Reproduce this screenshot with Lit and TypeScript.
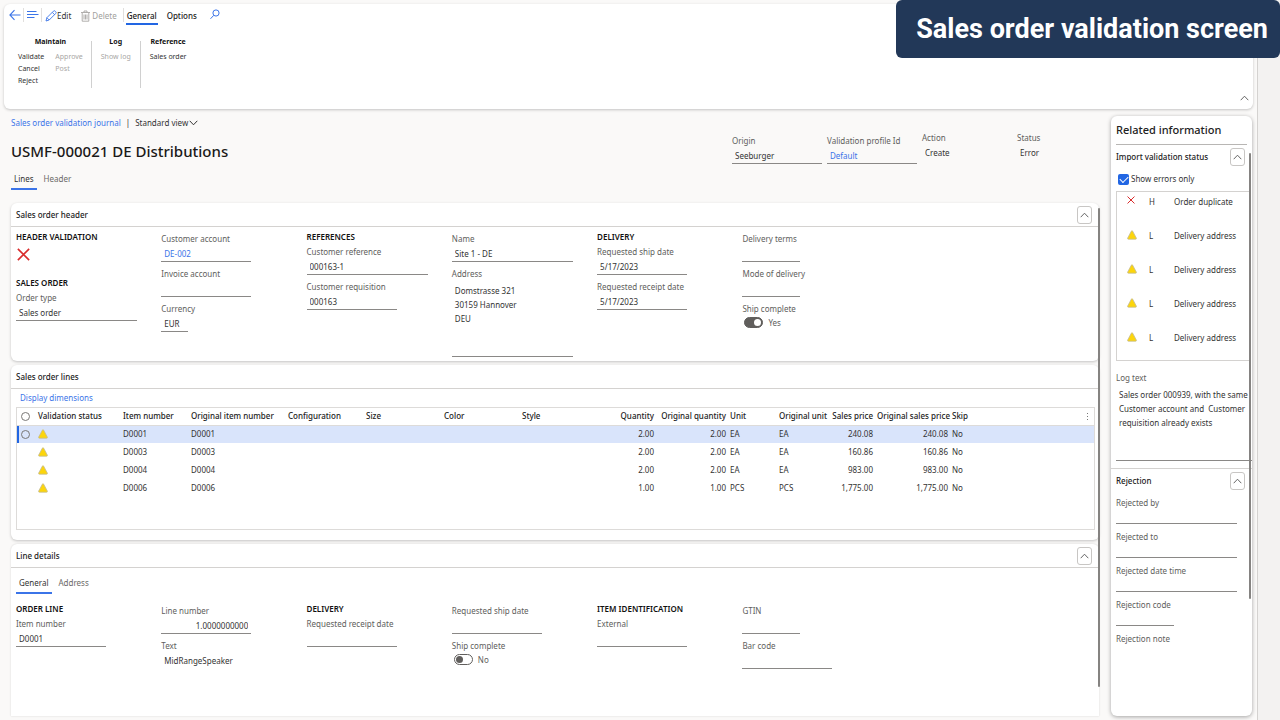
import { LitElement, html, css, svg, nothing } from "lit";
import { customElement } from "lit/decorators.js";
import { classMap } from "lit/directives/class-map.js";

type FieldSize = "xs" | "sm" | "md" | "lg";

interface Line {
  item: string;
  qty: string;
  unit: string;
  price: string;
}

const LINES: Line[] = [
  { item: "D0001", qty: "2.00", unit: "EA", price: "240.08" },
  { item: "D0003", qty: "2.00", unit: "EA", price: "160.86" },
  { item: "D0004", qty: "2.00", unit: "EA", price: "983.00" },
  { item: "D0006", qty: "1.00", unit: "PCS", price: "1,775.00" },
];

const ISSUES = [
  { error: true, level: "H", text: "Order duplicate" },
  { error: false, level: "L", text: "Delivery address" },
  { error: false, level: "L", text: "Delivery address" },
  { error: false, level: "L", text: "Delivery address" },
  { error: false, level: "L", text: "Delivery address" },
];

const icon = (w: number, h: number, body: unknown) =>
  html`<svg width=${w} height=${h} viewBox="0 0 ${w} ${h}" fill="none" aria-hidden="true">${body}</svg>`;

const chevronUp = icon(9, 6, svg`<path d="M.7 5.2 4.5 1.2 8.3 5.2" stroke="#555" stroke-width=".9"/>`);
const chevronDown = icon(9, 6, svg`<path d="M.7.8 4.5 4.8 8.3.8" stroke="#333" stroke-width="1"/>`);
const warning = icon(
  10,
  10,
  svg`<path d="M4.4 1.1Q5 .1 5.6 1.1L9.3 8Q9.7 9.2 8.6 9.2H1.4Q.3 9.2.7 8Z" fill="#fcd50c" stroke="#c4bb98" stroke-width=".8"/>`,
);
const cross = (size: number) =>
  html`<svg width=${size} height=${size} viewBox="0 0 12 12" fill="none" aria-hidden="true">
    <path d="M.8.8 11.2 11.2M11.2.8.8 11.2" stroke="#d92c2c" stroke-width="1.5" />
  </svg>`;

let nextId = 0;

const field = (label: string, value = "", size: FieldSize = "md", kind = "") => {
  const id = `f${nextId++}`;
  return html`<div class="field ${size} ${kind}">
    <label for=${id}>${label}</label>
    <input id=${id} type="text" .value=${value} />
  </div>`;
};

const toggle = (label: string, on: boolean) => {
  const id = `f${nextId++}`;
  return html`<div class="field toggle">
    <label for=${id}>${label}</label>
    <div class="switch-row">
      <input id=${id} class="switch" type="checkbox" role="switch" .checked=${on} />
      <span>${on ? "Yes" : "No"}</span>
    </div>
  </div>`;
};

@customElement("app-root")
export class AppRoot extends LitElement {
  static styles = css`
    :host {
      display: block;
      position: relative;
      min-height: 100vh;
      background: #faf9f8;
      color: #333;
      font: 8px/14px "Noto Sans", "Open Sans", sans-serif;
    }
    * { box-sizing: border-box; }
    svg { display: block; flex: none; }
    h1, h2, h3, p { margin: 0; font-size: inherit; }
    button, input, textarea { font: inherit; color: inherit; margin: 0; }
    button { background: none; border: 0; padding: 0; white-space: nowrap; }
    a { color: #3b74e8; text-decoration: none; }

    .page { display: flex; min-height: 100vh; }
    .workspace { flex: 1; min-width: 0; display: flex; flex-direction: column; padding: 4px; }
    .rail { width: 23px; background: #f3f2f1; border-left: 1px solid #d4d2d0; }
    .banner {
      position: absolute; top: 0; right: 0; z-index: 5;
      padding: 0 12px 0 20px; border-radius: 6px;
      background: #223858; color: #fff;
      font: 700 27px/58px Roboto, sans-serif; white-space: nowrap;
    }
    .surface { background: #fff; border-radius: 6px; box-shadow: 0 1px 3px rgba(0, 0, 0, 0.22); }

    .ribbon { height: 105px; padding: 2px 4px 4px 5px; display: flex; flex-direction: column; }
    .commands { display: flex; align-items: center; height: 18px; }
    .commands .bar { width: 1px; height: 14px; background: #e1dfdd; margin: 0 3px 0 2px; }
    .cmd { display: flex; align-items: center; gap: 0; height: 18px; padding-top: 1px; }
    .cmd.off { color: #a19f9d; gap: 2px; margin: 0 4px 0 10px; }
    .menu-tab { height: 19px; padding: 3px 1px 0; margin: 0 9px 0 -1px; font-weight: 500; color: #222; border-bottom: 2px solid transparent; }
    .menu-tab.on { border-color: #2266e3; }
    .search { margin-left: 3px; }
    .groups { display: flex; margin-top: 17px; font-size: 7px; line-height: 12px; }
    .group { height: 47px; padding: 0 9px; border-left: 1px solid #d0d0d0; text-align: center; }
    .group:first-child { border: 0; padding-right: 8px; }
    .group h2 { font-weight: 700; color: #111; line-height: 12px; margin: -5px 0 3px; }
    .group-cols { display: grid; grid-template-columns: auto auto; column-gap: 11px; text-align: left; }
    .group-cols div { display: flex; flex-direction: column; align-items: flex-start; }
    .group button { display: block; line-height: 12px; }
    .group button:disabled { color: #a8a6a4; }
    .ribbon-toggle { align-self: flex-end; margin-top: auto; padding: 4px 0; }

    .content { flex: 1; display: flex; gap: 12px; padding: 7px 1px 0 7px; }
    .main { flex: 1; min-width: 0; display: flex; flex-direction: column; }
    .intro { display: flex; justify-content: space-between; height: 87px; }
    .crumbs { display: flex; align-items: center; gap: 5px; white-space: nowrap; }
    .crumbs button { display: flex; align-items: center; gap: 1px; }
    .title { font-size: 15px; line-height: 22px; font-weight: 500; color: #1b1a19; margin: 10px 0 9px; white-space: nowrap; }
    .tabs { display: flex; gap: 4px; color: #6b6967; }
    .tabs button { padding: 0 3px 1px; line-height: 16px; border-bottom: 2px solid transparent; }
    .tabs .on { color: #333; border-color: #3b74e8; }
    .facts { display: flex; gap: 5px; padding-top: 18px; }
    .facts .plain { margin-top: -3px; }
    .facts .field:last-child { width: 82px; }

    .cards { flex: 1; display: flex; flex-direction: column; gap: 4px; position: relative; }
    .scroll-thumb { position: absolute; width: 2px; border-radius: 1px; background: #858381; }
    .cards > .scroll-thumb { top: 5px; bottom: 29px; right: -1px; }
    .card-head {
      display: flex; align-items: center; justify-content: space-between;
      height: 24px; padding: 0 7px 0 5px; border-bottom: 1px solid #d4d2d0;
    }
    .card-head h2 { font-weight: 500; color: #222; }
    .collapse {
      display: grid; place-items: center; width: 15px; height: 18px;
      border: 1px solid #c8c6c4; border-radius: 3px; background: #fff;
    }
    .columns { display: grid; grid-template-columns: repeat(6, 11fr) 16fr; padding: 3px 0 4px 5px; }
    .col { display: flex; flex-direction: column; gap: 5px; padding-top: 2px; min-width: 0; }
    .col.titled { padding-top: 0; }
    .col h3 { font-weight: 600; color: #111; line-height: 14px; margin-bottom: -4px; }
    .col .status { height: 26px; margin-bottom: 0; padding: 3px 1px; }

    .field { display: flex; flex-direction: column; }
    .field label { color: #605e5c; white-space: nowrap; line-height: 14px; }
    .field input[type="text"], .field textarea {
      height: 16px; width: 100%; padding: 0 3px; border: 0; border-bottom: 1px solid #8a8886;
      border-radius: 0; background: transparent; line-height: 14px; outline: 0;
    }
    .field textarea { height: 76px; padding-top: 3px; resize: none; display: block; overflow: hidden; }
    .field.xs { width: 27px; }
    .field.sm { width: 58px; }
    .field.md { width: 90px; }
    .field.lg { width: 121px; }
    .field.link input { color: #3b74e8; }
    .field.number input { text-align: right; }
    .field.plain input[type="text"] { border-color: transparent; }
    .switch-row { display: flex; align-items: center; gap: 5px; height: 13px; padding-left: 2px; color: #605e5c; }
    .switch {
      appearance: none; width: 19px; height: 11px; border-radius: 6px;
      border: 1px solid #605e5c; background: #fff; display: flex; align-items: center; padding: 0 1px;
    }
    .switch::before { content: ""; width: 7px; height: 7px; border-radius: 50%; background: #605e5c; }
    .switch:checked { background: #605e5c; justify-content: flex-end; }
    .switch:checked::before { background: #fff; }

    .lines-body { padding: 0 4px 10px 5px; }
    .lines-link { display: block; padding-left: 4px; line-height: 18px; }
    .grid-box { height: 123px; border: 1px solid #dddbd9; }
    table { width: 100%; border-collapse: collapse; table-layout: fixed; }
    th, td { height: 18px; padding: 0 2px; text-align: left; white-space: nowrap; line-height: 14px; }
    th { font-weight: 500; color: #222; height: 17px; border-bottom: 1px solid #dddbd9; }
    .num { text-align: right; }
    .selected { background: #d9e4fb; }
    .selected td:first-child { box-shadow: inset 2px 0 #2266e3; }
    .radio {
      appearance: none; display: block; width: 9px; height: 9px; margin-left: 2px;
      border: 1px solid #7a7876; border-radius: 50%; background: transparent;
    }
    .more { float: right; width: 9px; }
    .c-pick { width: 19px; } .c-status { width: 85px; } .c-item { width: 68px; }
    .c-orig { width: 97px; } .c-dim { width: 78px; } .c-qty { width: 58px; }
    .c-oqty { width: 72px; } .c-unit { width: 49px; } .c-price { width: 49px; } .c-oprice { width: 75px; }

    .details { flex: 1; border-radius: 6px 6px 0 0; box-shadow: 0 0 2px rgba(0, 0, 0, 0.16); }
    .details .tabs { padding: 7px 0 0 5px; }
    .details .columns { padding-top: 8px; }

    .side { position: relative; width: 141px; display: flex; flex-direction: column; box-shadow: 0 1px 4px rgba(0, 0, 0, 0.35); }
    .side > .scroll-thumb { top: 37px; height: 446px; right: 1px; }
    .side-title { margin: 0 5px; font-size: 11px; font-weight: 500; line-height: 28px; color: #222; border-bottom: 1px solid #b8b6b4; white-space: nowrap; }
    .side-head { display: flex; align-items: center; justify-content: space-between; height: 23px; padding: 0 7px 0 5px; }
    .side-head h2 { font-weight: 500; color: #222; }
    .check { display: flex; align-items: center; gap: 2px; padding: 4px 7px 5px; }
    .check input { appearance: none; width: 11px; height: 11px; border-radius: 2px; background: #2266e3; display: grid; place-items: center; }
    .check input::before {
      content: ""; width: 7px; height: 4px; border: solid #fff; border-width: 0 0 1px 1px;
      transform: translateY(-1px) rotate(-45deg);
    }
    .issues {
      list-style: none; margin: 0 1px 10px 5px; padding: 2px 0 0 10px; height: 170px;
      border: 1px solid #d4d2d0; border-right: 0; overflow: hidden;
    }
    .issues li { display: grid; grid-template-columns: 22px 25px 1fr; height: 34px; line-height: 16px; white-space: nowrap; }
    .issues svg { margin-top: 2px; }
    .side .field { margin-left: 5px; }
    .side .log textarea { width: 100%; padding-right: 0; }
    .rejection { margin-top: 7px; border-top: 1px solid #d4d2d0; }
    .rejection .fields { display: flex; flex-direction: column; gap: 6px; padding-top: 4px; }
    .rejection .field input[type="text"] { height: 14px; }
  `;

  private collapse(label: string) {
    return html`<button class="collapse" type="button" aria-label="Collapse ${label}">${chevronUp}</button>`;
  }

  private cardHead(title: string, collapsible = true) {
    return html`<header class="card-head">
      <h2>${title}</h2>
      ${collapsible ? this.collapse(title) : nothing}
    </header>`;
  }

  private ribbon() {
    return html`<header class="ribbon surface">
      <div class="commands">
        <button type="button" aria-label="Back">
          ${icon(12, 12, svg`<path d="M11.5 6H1M5.5 1.2.9 6l4.6 4.8" stroke="#3b74e8" stroke-width="1.1"/>`)}
        </button>
        <span class="bar"></span>
        <button type="button" aria-label="Show list">
          ${icon(12, 12, svg`<path d="M0 2.5h9.5M0 5.5h11.5M0 8.5h7.5" stroke="#3b74e8"/>`)}
        </button>
        <span class="bar"></span>
        <button class="cmd" type="button">
          ${icon(12, 12, svg`<path d="M1 11l.9-3.3L8.4 1.2a1.2 1.2 0 0 1 1.8 0l.5.5a1.2 1.2 0 0 1 0 1.8L4.2 10 1 11ZM7.3 2.4l2.3 2.3M1.9 7.7 4.2 10" stroke="#3b74e8" stroke-width=".9"/>`)}
          Edit
        </button>
        <button class="cmd off" type="button" disabled>
          ${icon(9, 12, svg`<path d="M0 2.5h9M3 2.2V1h3v1.2M1.2 2.8v8.4h6.6V2.8M3 4.5v5M4.5 4.5v5M6 4.5v5" stroke="#a8a6a4" stroke-width=".9"/>`)}
          Delete
        </button>
        <span class="bar"></span>
        <button class="menu-tab on" type="button">General</button>
        <button class="menu-tab" type="button">Options</button>
        <button class="search" type="button" aria-label="Search">
          ${icon(10, 12, svg`<circle cx="6" cy="4" r="3.1" stroke="#3b74e8"/><path d="M3.8 6.3.5 9.8" stroke="#3b74e8"/>`)}
        </button>
      </div>
      <div class="groups">
        <div class="group">
          <h2>Maintain</h2>
          <div class="group-cols">
            <div>
              <button type="button">Validate</button>
              <button type="button">Cancel</button>
              <button type="button">Reject</button>
            </div>
            <div>
              <button type="button" disabled>Approve</button>
              <button type="button" disabled>Post</button>
            </div>
          </div>
        </div>
        <div class="group">
          <h2>Log</h2>
          <button type="button" disabled>Show log</button>
        </div>
        <div class="group">
          <h2>Reference</h2>
          <button type="button">Sales order</button>
        </div>
      </div>
      <button class="ribbon-toggle" type="button" aria-label="Collapse ribbon">${chevronUp}</button>
    </header>`;
  }

  private headerCard() {
    return html`<section class="surface">
      ${this.cardHead("Sales order header")}
      <div class="columns">
        <div class="col titled">
          <h3>HEADER VALIDATION</h3>
          <div class="status">${cross(13)}</div>
          <h3>SALES ORDER</h3>
          ${field("Order type", "Sales order", "lg")}
        </div>
        <div class="col">
          ${field("Customer account", "DE-002", "md", "link")} ${field("Invoice account")}
          ${field("Currency", "EUR", "xs")}
        </div>
        <div class="col titled">
          <h3>REFERENCES</h3>
          ${field("Customer reference", "000163-1", "lg")} ${field("Customer requisition", "000163")}
        </div>
        <div class="col">
          ${field("Name", "Site 1 - DE", "lg")}
          <div class="field lg">
            <label for="address">Address</label>
            <textarea id="address" .value=${"Domstrasse 321\n30159 Hannover\nDEU"}></textarea>
          </div>
        </div>
        <div class="col titled">
          <h3>DELIVERY</h3>
          ${field("Requested ship date", "5/17/2023")} ${field("Requested receipt date", "5/17/2023")}
        </div>
        <div class="col">
          ${field("Delivery terms", "", "sm")} ${field("Mode of delivery", "", "sm")} ${toggle("Ship complete", true)}
        </div>
      </div>
    </section>`;
  }

  private linesCard() {
    return html`<section class="surface">
      ${this.cardHead("Sales order lines", false)}
      <div class="lines-body">
        <a class="lines-link" href="#dimensions">Display dimensions</a>
        <div class="grid-box">
          <table>
            <colgroup>
              <col class="c-pick" /><col class="c-status" /><col class="c-item" /><col class="c-orig" />
              <col class="c-dim" /><col class="c-dim" /><col class="c-dim" /><col class="c-dim" />
              <col class="c-qty" /><col class="c-oqty" /><col class="c-unit" /><col class="c-unit" />
              <col class="c-price" /><col class="c-oprice" /><col />
            </colgroup>
            <thead>
              <tr>
                <th><input class="radio" type="radio" name="all" aria-label="Select all" /></th>
                <th>Validation status</th>
                <th>Item number</th>
                <th>Original item number</th>
                <th>Configuration</th>
                <th>Size</th>
                <th>Color</th>
                <th>Style</th>
                <th class="num">Quantity</th>
                <th class="num">Original quantity</th>
                <th>Unit</th>
                <th>Original unit</th>
                <th class="num">Sales price</th>
                <th class="num">Original sales price</th>
                <th>
                  Skip
                  <button class="more" type="button" aria-label="Grid options">
                    ${icon(9, 14, svg`<path d="M4 4h1v1H4ZM4 7h1v1H4ZM4 10h1v1H4Z" fill="#777"/>`)}
                  </button>
                </th>
              </tr>
            </thead>
            <tbody>
              ${LINES.map(
                (l, i) => html`<tr class=${classMap({ selected: i === 0 })}>
                  <td>
                    ${i === 0
                      ? html`<input class="radio" type="radio" name="line" aria-label="Select ${l.item}" />`
                      : nothing}
                  </td>
                  <td>${warning}</td>
                  <td>${l.item}</td>
                  <td>${l.item}</td>
                  <td></td>
                  <td></td>
                  <td></td>
                  <td></td>
                  <td class="num">${l.qty}</td>
                  <td class="num">${l.qty}</td>
                  <td>${l.unit}</td>
                  <td>${l.unit}</td>
                  <td class="num">${l.price}</td>
                  <td class="num">${l.price}</td>
                  <td>No</td>
                </tr>`,
              )}
            </tbody>
          </table>
        </div>
      </div>
    </section>`;
  }

  private detailsCard() {
    return html`<section class="surface details">
      ${this.cardHead("Line details")}
      <nav class="tabs">
        <button class="on" type="button">General</button>
        <button type="button">Address</button>
      </nav>
      <div class="columns">
        <div class="col titled">
          <h3>ORDER LINE</h3>
          ${field("Item number", "D0001")}
        </div>
        <div class="col">
          ${field("Line number", "1.0000000000", "md", "number")} ${field("Text", "MidRangeSpeaker", "md", "plain")}
        </div>
        <div class="col titled">
          <h3>DELIVERY</h3>
          ${field("Requested receipt date")}
        </div>
        <div class="col">${field("Requested ship date")} ${toggle("Ship complete", false)}</div>
        <div class="col titled">
          <h3>ITEM IDENTIFICATION</h3>
          ${field("External")}
        </div>
        <div class="col">${field("GTIN", "", "sm")} ${field("Bar code")}</div>
      </div>
    </section>`;
  }

  private sidePanel() {
    return html`<aside class="side surface">
      <h1 class="side-title">Related information</h1>
      <div class="side-head">
        <h2>Import validation status</h2>
        ${this.collapse("Import validation status")}
      </div>
      <label class="check"><input type="checkbox" checked />Show errors only</label>
      <ul class="issues">
        ${ISSUES.map(
          (i) => html`<li>
            ${i.error ? cross(8) : warning}<span>${i.level}</span><span>${i.text}</span>
          </li>`,
        )}
      </ul>
      <div class="field log">
        <label for="log">Log text</label>
        <textarea
          id="log"
          .value=${"Sales order 000939, with the same\nCustomer account and  Customer\nrequisition already exists"}
        ></textarea>
      </div>
      <section class="rejection">
        <div class="side-head">
          <h2>Rejection</h2>
          ${this.collapse("Rejection")}
        </div>
        <div class="fields">
          ${field("Rejected by", "", "lg")} ${field("Rejected to", "", "lg")}
          ${field("Rejected date time", "", "lg")} ${field("Rejection code", "", "sm")}
          ${field("Rejection note", "", "sm", "plain")}
        </div>
      </section>
      <span class="scroll-thumb"></span>
    </aside>`;
  }

  render() {
    return html`<div class="page">
        <div class="workspace">
          ${this.ribbon()}
          <div class="content">
            <main class="main">
              <div class="intro">
                <div>
                  <nav class="crumbs">
                    <a href="#journal">Sales order validation journal</a><span>|</span>
                    <button type="button">Standard view ${chevronDown}</button>
                  </nav>
                  <h1 class="title">USMF-000021 DE Distributions</h1>
                  <nav class="tabs">
                    <button class="on" type="button">Lines</button>
                    <button type="button">Header</button>
                  </nav>
                </div>
                <div class="facts">
                  ${field("Origin", "Seeburger")} ${field("Validation profile Id", "Default", "md", "link")}
                  ${field("Action", "Create", "md", "plain")} ${field("Status", "Error", "md", "plain")}
                </div>
              </div>
              <div class="cards">
                ${this.headerCard()} ${this.linesCard()} ${this.detailsCard()}
                <span class="scroll-thumb"></span>
              </div>
            </main>
            ${this.sidePanel()}
          </div>
        </div>
        <aside class="rail"></aside>
      </div>
      <div class="banner">Sales order validation screen</div>`;
  }
}
